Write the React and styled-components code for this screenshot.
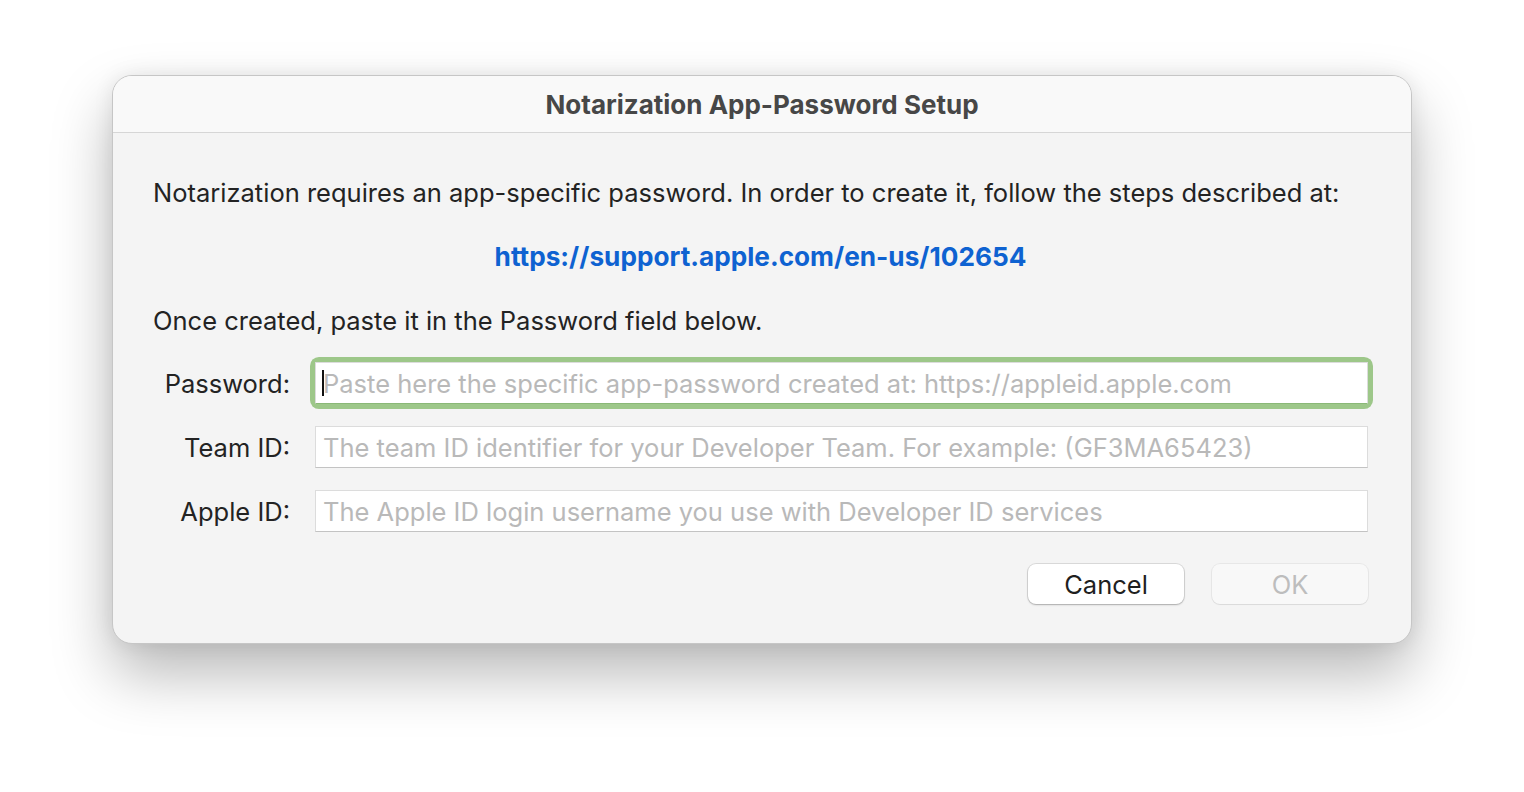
import React from "react";
import styled, { createGlobalStyle } from "styled-components";

const Global = createGlobalStyle`
  html, body { margin: 0; padding: 0; background: #ffffff; }
  body { font-family: Inter, "Noto Sans", sans-serif; -webkit-font-smoothing: antialiased; }
`;

const Page = styled.div`
  width: 1524px;
  height: 792px;
  padding: 75px 0 0 112px;
  box-sizing: border-box;
  display: flex;
  background: #ffffff;
`;

const Window = styled.div`
  width: 1300px;
  height: 569px;
  box-sizing: border-box;
  border-radius: 20px;
  border: 1px solid #c6c6c6;
  background: #f4f4f4;
  overflow: hidden;
  display: flex;
  flex-direction: column;
  box-shadow: 0 30px 60px rgba(0, 0, 0, 0.28), 0 0 20px rgba(0, 0, 0, 0.08);
`;

const TitleBar = styled.div`
  height: 56px;
  flex: none;
  background: #f9f9f9;
  border-bottom: 1px solid #d6d6d6;
  display: flex;
  align-items: center;
  justify-content: center;
  font-size: 26px;
  font-weight: 700;
  color: #474747;
`;

const Body = styled.div`
  padding: 44px 43px 0 40px;
  display: flex;
  flex-direction: column;
`;

const Text = styled.p`
  margin: 0;
  font-size: 25.5px;
  line-height: 32px;
  color: #232323;
`;

const LinkLine = styled.a`
  display: block;
  margin: 32px 0 32px;
  text-align: center;
  font-size: 26.2px;
  line-height: 32px;
  font-weight: 700;
  color: #0e62d1;
  text-decoration: none;
`;

const Form = styled.div`
  margin-top: 25px;
  display: grid;
  grid-template-columns: 137px 1fr;
  column-gap: 25px;
  row-gap: 22px;
  align-items: center;
`;

const Label = styled.label`
  text-align: right;
  font-size: 25.5px;
  color: #232323;
`;

const FieldWrap = styled.div`
  position: relative;
  height: 42px;
  box-sizing: border-box;
  border-radius: 4px;
  ${(p) => (p.$focused ? `box-shadow: 0 0 0 5px #9dc789;` : ``)}
`;

const Input = styled.input`
  width: 100%;
  height: 42px;
  box-sizing: border-box;
  border: 1px solid #dcdcdc;
  border-bottom-color: ${(p) => (p.$focused ? "#8ab877" : "#c3c3c3")};
  background: #ffffff;
  padding: 0 7px;
  font-family: Inter, "Noto Sans", sans-serif;
  font-size: 25.5px;
  color: #232323;
  outline: none;
  &::placeholder { color: #b9b9b9; }
`;

const Caret = styled.span`
  position: absolute;
  left: 7px;
  top: 8px;
  width: 2px;
  height: 26px;
  background: #111;
`;

const Buttons = styled.div`
  margin-top: 32px;
  display: flex;
  justify-content: flex-end;
  gap: 28px;
`;

const Button = styled.button`
  width: 156px;
  height: 40px;
  border-radius: 8px;
  border: none;
  font-family: Inter, "Noto Sans", sans-serif;
  font-size: 25.5px;
  background: ${(p) => (p.disabled ? "#f8f8f8" : "#ffffff")};
  color: ${(p) => (p.disabled ? "#bdbdbd" : "#1f1f1f")};
  box-shadow: ${(p) =>
    p.disabled
      ? "0 0 0 1px rgba(0,0,0,0.05), 0 1px 1px rgba(0,0,0,0.06)"
      : "0 0 0 1px rgba(0,0,0,0.1), 0 1px 2px rgba(0,0,0,0.22)"};
`;

export default function App() {
  return (
    <>
      <Global />
      <Page>
        <Window>
          <TitleBar>Notarization App-Password Setup</TitleBar>
          <Body>
            <Text>
              Notarization requires an app-specific password. In order to create it, follow the steps described at:
            </Text>
            <LinkLine href="#">https://support.apple.com/en-us/102654</LinkLine>
            <Text>Once created, paste it in the Password field below.</Text>
            <Form>
              <Label>Password:</Label>
              <FieldWrap $focused>
                <Input $focused placeholder="Paste here the specific app-password created at: https://appleid.apple.com" />
                <Caret />
              </FieldWrap>
              <Label>Team ID:</Label>
              <FieldWrap>
                <Input placeholder="The team ID identifier for your Developer Team. For example: (GF3MA65423)" />
              </FieldWrap>
              <Label>Apple ID:</Label>
              <FieldWrap>
                <Input placeholder="The Apple ID login username you use with Developer ID services" />
              </FieldWrap>
            </Form>
            <Buttons>
              <Button>Cancel</Button>
              <Button disabled>OK</Button>
            </Buttons>
          </Body>
        </Window>
      </Page>
    </>
  );
}
